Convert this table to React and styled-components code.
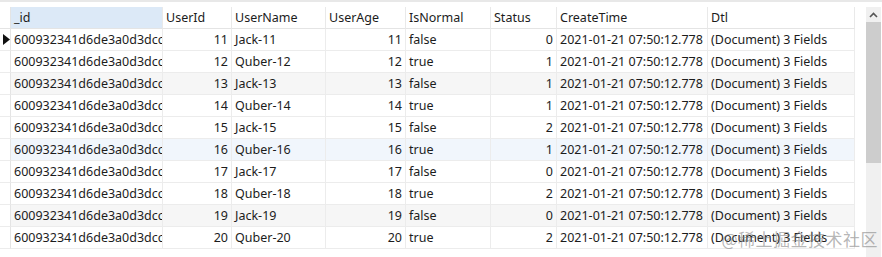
import React from "react";
import styled, { createGlobalStyle } from "styled-components";

const GlobalStyle = createGlobalStyle`
  html, body {
    margin: 0;
    padding: 0;
    background: #ffffff;
  }
  * {
    box-sizing: border-box;
  }
`;

const columns = [
  { key: "_id", label: "_id", width: 152 },
  { key: "userId", label: "UserId", width: 69, align: "right" },
  { key: "userName", label: "UserName", width: 94 },
  { key: "userAge", label: "UserAge", width: 80, align: "right" },
  { key: "isNormal", label: "IsNormal", width: 85 },
  { key: "status", label: "Status", width: 66, align: "right" },
  { key: "createTime", label: "CreateTime", width: 151 },
  { key: "dtl", label: "Dtl", width: 147 },
];

const rows = Array.from({ length: 10 }, (_, i) => {
  const n = 11 + i;
  const even = n % 2 === 0;
  return {
    _id: "600932341d6de3a0d3dcc",
    userId: n,
    userName: (even ? "Quber-" : "Jack-") + n,
    userAge: n,
    isNormal: even ? "true" : "false",
    status: [0, 1, 1, 1, 2, 1, 0, 2, 0, 2][i],
    createTime: "2021-01-21 07:50:12.778",
    dtl: "(Document) 3 Fields",
  };
});

const rowTone = { 2: "stripe", 5: "hover", 8: "stripe" };

function App() {
  const template = "11px " + columns.map((c) => c.width + "px").join(" ");
  return (
    <Page>
      <GlobalStyle />
      <TopStrip />
      <Body>
        <Grid style={{ gridTemplateColumns: template }}>
          <HeaderCell $marker />
          {columns.map((c) => (
            <HeaderCell key={c.key} $active={c.key === "_id"}>
              {c.label}
            </HeaderCell>
          ))}
          {rows.map((r, i) => (
            <React.Fragment key={r.userId}>
              <MarkerCell $tone={rowTone[i]}>
                {i === 0 && (
                  <svg width="7" height="11" viewBox="0 0 7 11">
                    <polygon points="0,0 7,5.5 0,11" fill="#111" />
                  </svg>
                )}
              </MarkerCell>
              {columns.map((c) => (
                <Cell key={c.key} $align={c.align} $tone={rowTone[i]}>
                  <CellText $align={c.align}>{r[c.key]}</CellText>
                </Cell>
              ))}
            </React.Fragment>
          ))}
        </Grid>
        <Scrollbar>
          <ScrollArrow>
            <svg width="9" height="6" viewBox="0 0 9 6">
              <polyline points="1,5 4.5,1.5 8,5" fill="none" stroke="#555" strokeWidth="1.6" />
            </svg>
          </ScrollArrow>
          <ScrollThumb />
          <ScrollTrack />
        </Scrollbar>
      </Body>
      <Watermark>@稀土掘金技术社区</Watermark>
    </Page>
  );
}

export default App;

const Page = styled.div`
  position: relative;
  width: 882px;
  height: 257px;
  overflow: hidden;
  background: #fff;
  font-family: "Noto Sans", "Open Sans", sans-serif;
  font-size: 12.5px;
  color: #1c1c1c;
`;

const TopStrip = styled.div`
  height: 7px;
  border-top: 2px solid #e8e8e8;
`;

const Body = styled.div`
  display: flex;
  align-items: flex-start;
  height: 250px;
`;

const Grid = styled.div`
  display: grid;
  grid-auto-rows: 22px;
  width: 866px;
  padding-right: 11px;
`;

const HeaderCell = styled.div`
  display: flex;
  align-items: center;
  padding: 0 3px;
  white-space: nowrap;
  overflow: hidden;
  background: ${(p) => (p.$active ? "#dce9f7" : "#fff")};
  border-right: 1px solid ${(p) => (p.$marker ? "#e4e4e4" : "#e9e9e9")};
  border-bottom: 1px solid #e4e4e4;
`;

const toneBg = (tone) =>
  tone === "stripe" ? "#f6f6f6" : tone === "hover" ? "#f1f6fc" : "#fff";

const MarkerCell = styled.div`
  display: flex;
  align-items: center;
  padding-left: 3px;
  background: #fff;
  border-right: 1px solid #e4e4e4;
  border-bottom: 1px solid #ececec;
`;

const Cell = styled.div`
  display: flex;
  align-items: center;
  justify-content: ${(p) => (p.$align === "right" ? "flex-end" : "flex-start")};
  padding: 0 3px;
  overflow: hidden;
  background: ${(p) => toneBg(p.$tone)};
  border-right: 1px solid #ececec;
  border-bottom: 1px solid #ececec;
`;

const CellText = styled.span`
  white-space: nowrap;
  text-align: ${(p) => p.$align || "left"};
`;

const Scrollbar = styled.div`
  display: flex;
  flex-direction: column;
  width: 15px;
  height: 250px;
`;

const ScrollArrow = styled.div`
  height: 15px;
  display: flex;
  align-items: center;
  justify-content: center;
  background: #f0f0f0;
`;

const ScrollThumb = styled.div`
  height: 141px;
  background: #cdcdcd;
`;

const ScrollTrack = styled.div`
  flex: 1;
  background: #f0f0f0;
`;

const Watermark = styled.div`
  position: absolute;
  right: 4px;
  bottom: 6px;
  font-family: "Noto Sans CJK SC", "Noto Sans", sans-serif;
  font-size: 17px;
  color: rgba(120, 120, 120, 0.55);
  letter-spacing: 0.5px;
  pointer-events: none;
`;
